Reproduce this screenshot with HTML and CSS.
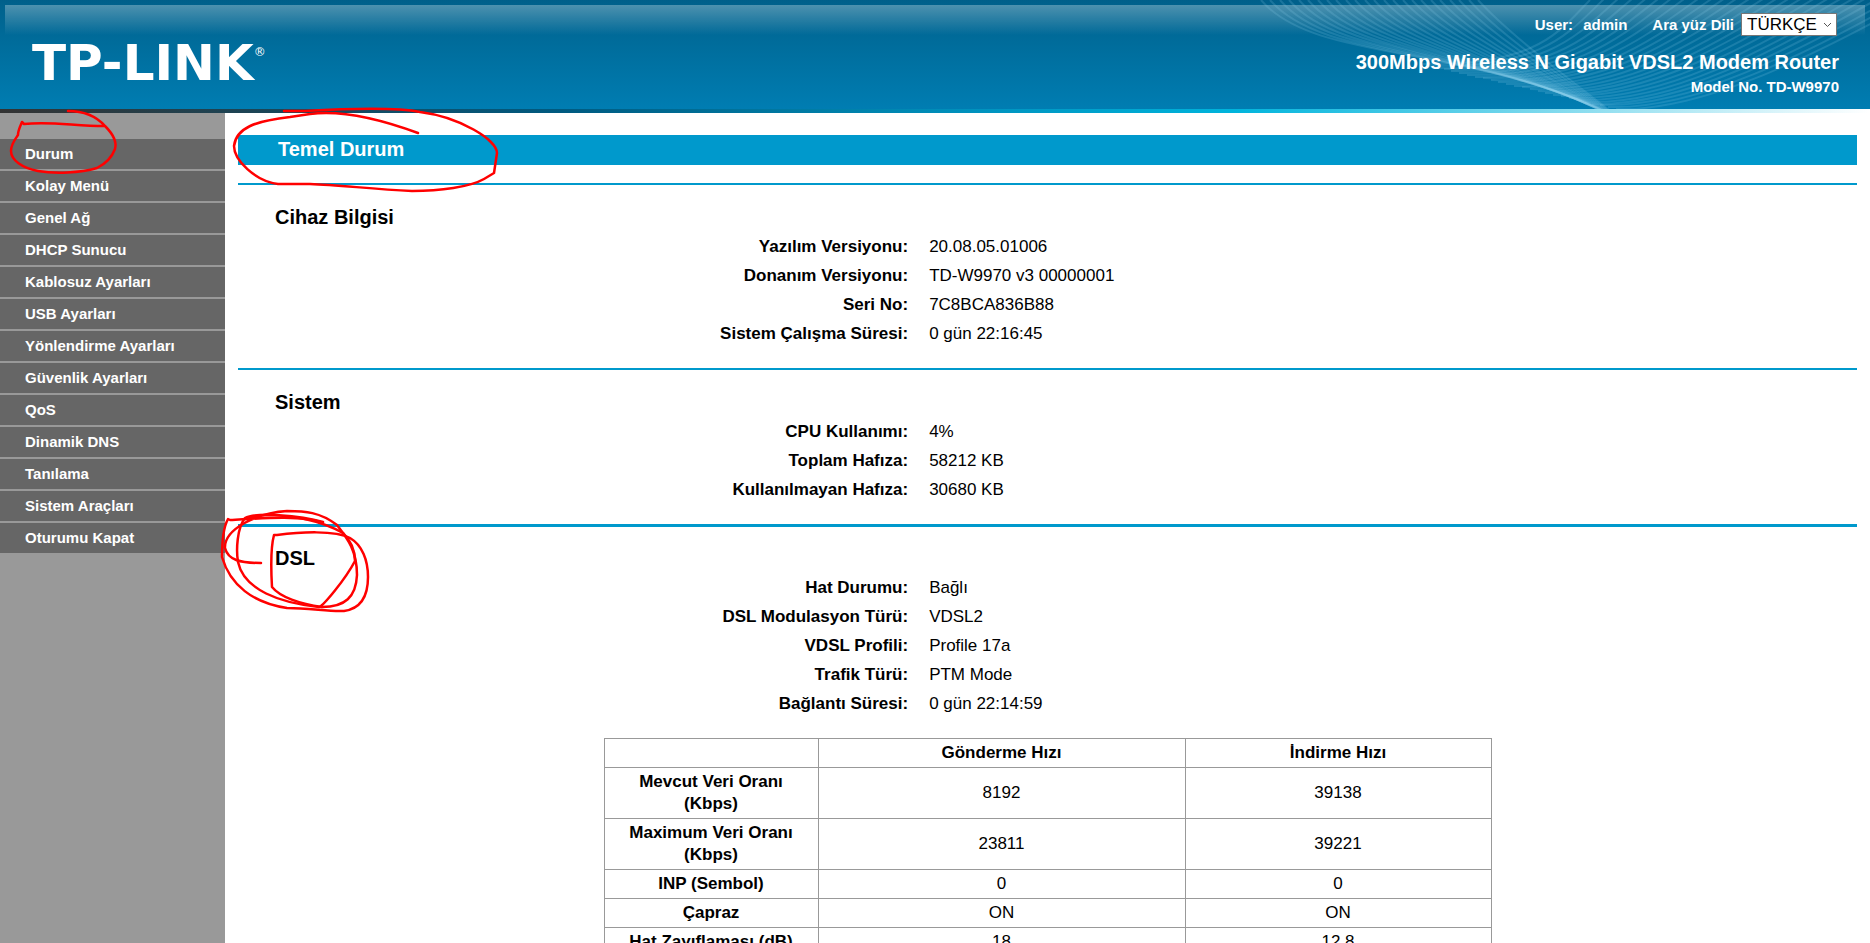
FILE: index.html
```html
<!DOCTYPE html>
<html lang="tr">

<head>
    <meta charset="UTF-8">
    <meta name="viewport" content="width=device-width, initial-scale=1.0">
    <title>TD-W9970</title>
    <link rel="stylesheet" href="styles.css">
</head>

<body>
    <header class="header">
        <svg class="waves" width="620" height="109" viewBox="0 0 620 109"></svg>
        <div class="logo">TP-LINK<span class="reg">®</span></div>
        <div class="header-info">
            <div class="user-row">
                <span class="user">User:</span>
                <span class="user-name">admin</span>
                <label for="lang">Ara yüz Dili</label>
                <div class="select">
                    <select id="lang">
                        <option>TÜRKÇE</option>
                    </select>
                    <svg width="9" height="6" viewBox="0 0 9 6"><path d="M1 1l3.500 3.500L8 1" /></svg>
                </div>
            </div>
            <p class="product">300Mbps Wireless N Gigabit VDSL2 Modem Router</p>
            <p class="model">Model No. TD-W9970</p>
        </div>
    </header>
    <div class="strip"></div>

    <div class="layout">
        <nav class="menu">
            <a href="#">Durum</a>
            <a href="#">Kolay Menü</a>
            <a href="#">Genel Ağ</a>
            <a href="#">DHCP Sunucu</a>
            <a href="#">Kablosuz Ayarları</a>
            <a href="#">USB Ayarları</a>
            <a href="#">Yönlendirme Ayarları</a>
            <a href="#">Güvenlik Ayarları</a>
            <a href="#">QoS</a>
            <a href="#">Dinamik DNS</a>
            <a href="#">Tanılama</a>
            <a href="#">Sistem Araçları</a>
            <a href="#">Oturumu Kapat</a>
        </nav>

        <main class="content">
            <h1>Temel Durum</h1>

            <section>
                <h2>Cihaz Bilgisi</h2>
                <dl>
                    <dt>Yazılım Versiyonu:</dt>
                    <dd>20.08.05.01006</dd>
                    <dt>Donanım Versiyonu:</dt>
                    <dd>TD-W9970 v3 00000001</dd>
                    <dt>Seri No:</dt>
                    <dd>7C8BCA836B88</dd>
                    <dt>Sistem Çalışma Süresi:</dt>
                    <dd>0 gün 22:16:45</dd>
                </dl>
            </section>

            <section>
                <h2>Sistem</h2>
                <dl>
                    <dt>CPU Kullanımı:</dt>
                    <dd>4%</dd>
                    <dt>Toplam Hafıza:</dt>
                    <dd>58212 KB</dd>
                    <dt>Kullanılmayan Hafıza:</dt>
                    <dd>30680 KB</dd>
                </dl>
            </section>

            <section class="dsl">
                <h2>DSL</h2>
                <dl>
                    <dt>Hat Durumu:</dt>
                    <dd>Bağlı</dd>
                    <dt>DSL Modulasyon Türü:</dt>
                    <dd>VDSL2</dd>
                    <dt>VDSL Profili:</dt>
                    <dd>Profile 17a</dd>
                    <dt>Trafik Türü:</dt>
                    <dd>PTM Mode</dd>
                    <dt>Bağlantı Süresi:</dt>
                    <dd>0 gün 22:14:59</dd>
                </dl>
            </section>

            <table class="rates">
                <thead>
                    <tr>
                        <th class="name"></th>
                        <th>Gönderme Hızı</th>
                        <th class="down">İndirme Hızı</th>
                    </tr>
                </thead>
                <tbody>
                    <tr>
                        <th>Mevcut Veri Oranı (Kbps)</th>
                        <td>8192</td>
                        <td>39138</td>
                    </tr>
                    <tr>
                        <th>Maximum Veri Oranı (Kbps)</th>
                        <td>23811</td>
                        <td>39221</td>
                    </tr>
                    <tr>
                        <th>INP (Sembol)</th>
                        <td>0</td>
                        <td>0</td>
                    </tr>
                    <tr>
                        <th>Çapraz</th>
                        <td>ON</td>
                        <td>ON</td>
                    </tr>
                    <tr>
                        <th>Hat Zayıflaması (dB)</th>
                        <td>18</td>
                        <td>12.8</td>
                    </tr>
                </tbody>
            </table>
        </main>
    </div>

    <!-- red pen marks -->
    <svg class="marks" width="520" height="640" viewBox="0 0 520 640">
        <path d="M68 111C85 111 97 117 105 126C113 134 117 142 115 149C112 157 105 164 97 168C80 173 55 174 38 171C22 168 11 160 11 151C11 144 16 138 18 135C18 130 21 125 22 122L24 124C50 121 75 126 104 126" />
        <path d="M284 111H305C360 108 400 108 420 112C460 117 497 140 497 153L494 173L484 179C470 187 440 191 412 191C370 189 340 185 310 184H278C255 181 234 160 234 146C236 128 255 121 290 117L310 114C340 110 380 119 418 133" />
        <path d="M323 523C303 515 263 518 230 520L228 519C223 528 222 540 222 557C230 585 253 603 287 608C310 608 330 612 344 611C358 609 368 600 368 577C368 560 362 545 350 538C335 530 300 532 277 535L274 535C270 550 271 570 272 587C280 597 300 604 322 607C345 607 356 597 357 575C357 550 347 538 337 525C320 512 305 511 287 511C255 513 224 530 225 548C228 560 240 563 261 563" />
        <path d="M323 522C300 515 255 512 245 518C237 528 236 550 238 562C244 590 280 603 319 607C323 606 345 580 355 561C355 548 350 540 343 533C320 520 290 515 263 515L245 519" />
    </svg>

    <script>
        // each family of lines goes step by step from the first curve to the last one
        var families = [
            { count: 24, from: [11, 0, 60, 58, 190, 45, 330, 100], to: [228, 0, 260, 35, 320, 80, 375, 122] },
            { count: 26, from: [170, 64, 290, 66, 310, 30, 340, 0], to: [366, 109, 450, 112, 560, 60, 700, -20] }
        ]

        var waves = document.querySelector(".waves")

        families.forEach((f) => {
            for (var i = 0; i < f.count; i++) {
                var p = f.from.map((v, k) => Math.round(v + (f.to[k] - v) * i / (f.count - 1)))
                var path = document.createElementNS("http://www.w3.org/2000/svg", "path")
                path.setAttribute("d", "M" + p[0] + " " + p[1] + "C" + p.slice(2).join(" "))
                waves.appendChild(path)
            }
        })
    </script>
</body>

</html>
```

FILE: styles.css
```css
* {
    margin: 0;
    padding: 0;
    box-sizing: border-box;
}

body {
    position: relative;
    display: flex;
    flex-direction: column;
    height: 100vh;
    overflow: hidden;
    background: #fff;
    color: #000;
    font-family: "Liberation Sans", Arial, sans-serif;
    font-size: 17px;
}

.header {
    position: relative;
    flex: none;
    display: flex;
    justify-content: space-between;
    height: 109px;
    padding: 12px 31px 0 32px;
    background: linear-gradient(#005f8a, #00628d 5px, #006a98 34px, #007db2);
    color: #fff;
    font-weight: bold;
}

/* glossy band on top */
.header::before {
    content: "";
    position: absolute;
    top: 5px;
    left: 5px;
    right: 5px;
    height: 30px;
    background: linear-gradient(rgba(255, 255, 255, 0.3), rgba(255, 255, 255, 0));
}

.waves {
    position: absolute;
    top: 0;
    right: 0;
    fill: none;
    stroke: #8fd0ec;
    stroke-width: 2;
    stroke-opacity: 0.18;
}

.logo {
    position: relative;
    display: flex;
    align-items: flex-start;
    margin-top: 23px;
    font-family: "DejaVu Sans", sans-serif;
    font-size: 50px;
    line-height: 56px;
}

.reg {
    font-size: 12px;
    font-weight: normal;
    line-height: 34px;
}

.header-info {
    position: relative;
    text-align: right;
}

.user-row {
    display: flex;
    justify-content: flex-end;
    align-items: center;
    height: 24px;
    padding-right: 2px;
    font-size: 15px;
}

.user-name {
    margin: 0 25px 0 10px;
}

.select {
    position: relative;
    margin-left: 7px;
}

.select select {
    display: block;
    width: 96px;
    height: 23px;
    padding: 0 5px;
    border: 1px solid #767676;
    border-radius: 0;
    background: #fff;
    color: #000;
    font-family: inherit;
    font-size: 17px;
    appearance: none;
}

.select svg {
    position: absolute;
    top: 9px;
    right: 5px;
    fill: none;
    stroke: #555;
}

.product {
    margin-top: 14px;
    font-size: 20px;
    line-height: 24px;
}

.model {
    margin-top: 3px;
    font-size: 15px;
    line-height: 20px;
}

.strip {
    flex: none;
    height: 4px;
    background: linear-gradient(to right, #333, #005a80 30%, #0094c0 53%, #00b4dc 66%, #fff);
}

.layout {
    flex: 1;
    display: flex;
    min-height: 0;
}

.menu {
    flex: none;
    display: flex;
    flex-direction: column;
    gap: 2px;
    width: 225px;
    padding-top: 26px;
    background: #999;
}

.menu a {
    height: 30px;
    padding-left: 25px;
    background: #666;
    color: #fff;
    font-size: 15px;
    font-weight: bold;
    line-height: 30px;
    text-decoration: none;
}

.content {
    flex: 1;
    padding: 22px 13px 0;
}

.content h1 {
    margin-bottom: 18px;
    padding: 0 40px 2px;
    background: #0099cc;
    color: #fff;
    font-size: 20px;
    line-height: 28px;
}

.content section {
    padding: 17px 0 20px;
    border-top: 2px solid #0099cc;
}

.content .dsl {
    padding-top: 16px;
    border-top-width: 3px;
}

.content h2 {
    padding-left: 37px;
    font-size: 20px;
    line-height: 30px;
}

.content dl {
    display: grid;
    grid-template-columns: 13fr 18fr;
    column-gap: 21px;
    line-height: 29px;
}

.content dt {
    font-weight: bold;
    text-align: right;
}

.rates {
    width: 100%;
    max-width: 888px;
    margin: 0 auto;
    border-collapse: collapse;
    table-layout: fixed;
    text-align: center;
}

.rates th,
.rates td {
    height: 29px;
    padding: 3px 16px;
    border: 1px solid #999;
    line-height: 22px;
}

.rates .name {
    width: 214px;
}

.rates .down {
    width: 306px;
}

.marks {
    position: absolute;
    top: 0;
    left: 0;
    fill: none;
    stroke: #f00;
    stroke-width: 2.5;
    stroke-linecap: round;
    stroke-linejoin: round;
    pointer-events: none;
}
```
